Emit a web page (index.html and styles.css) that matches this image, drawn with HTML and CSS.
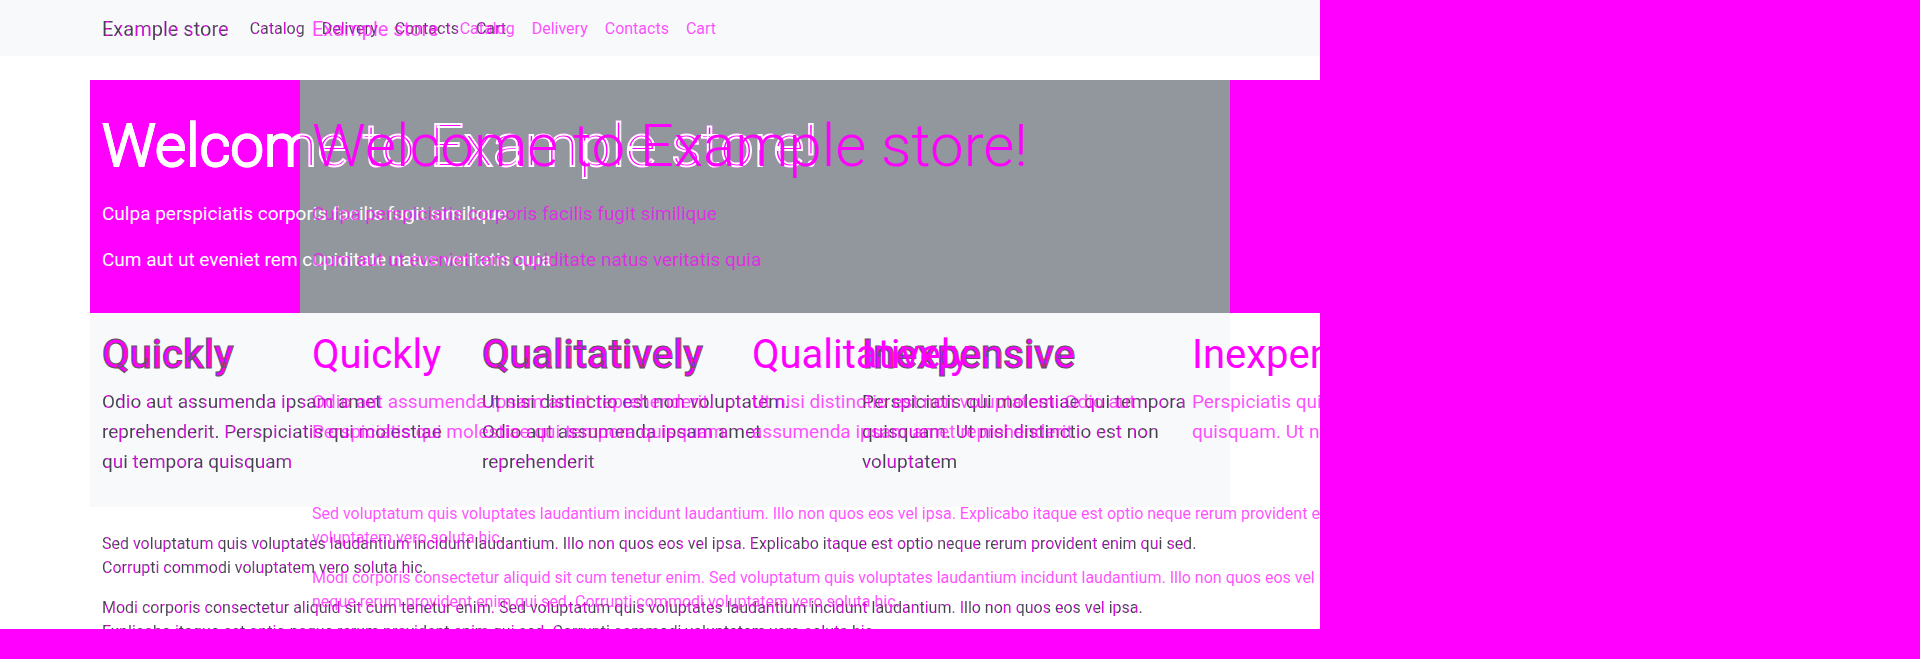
FILE: index.html
```html
<!DOCTYPE html>
<html lang="en">
<head>
<meta charset="utf-8">
<title>Example store</title>
<link rel="stylesheet" href="styles.css">
</head>
<body>
<div class="frame">
  <div class="layer base">
    <nav class="navbar">
      <div class="container nav-row">
        <a class="brand" href="#">Example store</a>
        <a class="nav-link" href="#">Catalog</a>
        <a class="nav-link" href="#">Delivery</a>
        <a class="nav-link" href="#">Contacts</a>
        <a class="nav-link" href="#">Cart</a>
      </div>
    </nav>
    <header class="hero">
      <h1 class="display">Welcome to Example store!</h1>
      <p class="lead">Culpa perspiciatis corporis facilis fugit similique</p>
      <p class="lead">Cum aut ut eveniet rem cupiditate natus veritatis quia</p>
    </header>
    <main class="container">
      <section class="features">
        <div><h2 class="title">Quickly</h2><p class="lead">Odio aut assumenda ipsam amet<br>reprehenderit. Perspiciatis qui molestiae<br>qui tempora quisquam</p></div>
        <div><h2 class="title">Qualitatively</h2><p class="lead">Ut nisi distinctio est non voluptatem.<br>Odio aut assumenda ipsam amet<br>reprehenderit</p></div>
        <div><h2 class="title">Inexpensive</h2><p class="lead">Perspiciatis qui molestiae qui tempora<br>quisquam. Ut nisi distinctio est non<br>voluptatem</p></div>
      </section>
      <section class="copy">
        <p class="text">Sed voluptatum quis voluptates laudantium incidunt laudantium. Illo non quos eos vel ipsa. Explicabo itaque est optio neque rerum provident enim qui sed.<br>Corrupti commodi voluptatem vero soluta hic.</p>
        <p class="text">Modi corporis consectetur aliquid sit cum tenetur enim. Sed voluptatum quis voluptates laudantium incidunt laudantium. Illo non quos eos vel ipsa.<br>Explicabo itaque est optio neque rerum provident enim qui sed. Corrupti commodi voluptatem vero soluta hic.</p>
      </section>
    </main>
  </div>
  <div class="layer ghost">
    <nav class="navbar">
      <div class="container nav-row">
        <a class="brand" href="#">Example store</a>
        <a class="nav-link" href="#">Catalog</a>
        <a class="nav-link" href="#">Delivery</a>
        <a class="nav-link" href="#">Contacts</a>
        <a class="nav-link" href="#">Cart</a>
      </div>
    </nav>
    <header class="hero">
      <h1 class="display">Welcome to Example store!</h1>
      <p class="lead">Culpa perspiciatis corporis facilis fugit similique</p>
      <p class="lead">Cum aut ut eveniet rem cupiditate natus veritatis quia</p>
    </header>
    <main class="container">
      <section class="features">
        <div><h2 class="title">Quickly</h2><p class="lead">Odio aut assumenda ipsam amet reprehenderit.<br>Perspiciatis qui molestiae qui tempora quisquam</p></div>
        <div><h2 class="title">Qualitatively</h2><p class="lead">Ut nisi distinctio est non voluptatem. Odio aut<br>assumenda ipsam amet reprehenderit</p></div>
        <div><h2 class="title">Inexpensive</h2><p class="lead">Perspiciatis qui molestiae qui tempora<br>quisquam. Ut nisi distinctio est non voluptatem</p></div>
      </section>
      <section class="copy">
        <p class="text">Sed voluptatum quis voluptates laudantium incidunt laudantium. Illo non quos eos vel ipsa. Explicabo itaque est optio neque rerum provident enim qui sed. Corrupti commodi<br>voluptatem vero soluta hic.</p>
        <p class="text">Modi corporis consectetur aliquid sit cum tenetur enim. Sed voluptatum quis voluptates laudantium incidunt laudantium. Illo non quos eos vel ipsa. Explicabo itaque est optio<br>neque rerum provident enim qui sed. Corrupti commodi voluptatem vero soluta hic.</p>
      </section>
    </main>
  </div>
</div>
</body>
</html>
```
FILE: styles.css
```css
:root {
  --mark: #ff00ff;
  --mark-soft: rgba(255, 0, 255, 0.7);
  --ink: #212529;
  --panel: #f7f9fb;
  --slate: #92969d;
}
* { box-sizing: border-box; }
body {
  margin: 0;
  background: var(--mark);
  color: var(--ink);
  font: 400 16px/24px Roboto, "Liberation Sans", sans-serif;
  overflow: hidden;
}
h1, h2, p { margin: 0; }
a { color: inherit; text-decoration: none; }

.frame {
  display: grid;
  max-width: 1320px;
  height: calc(100vh - 30px);
  overflow: hidden;
  background: #fff;
}
.layer { grid-area: 1 / 1; min-width: 0; }
.container { margin-left: 90px; max-width: 1140px; }

.navbar { height: 56px; padding-top: 2px; }
.base .navbar { background: var(--panel); }
.nav-row {
  display: flex;
  align-items: center;
  height: 100%;
  padding: 0 12px;
  gap: 17px;
}
.brand { font-size: 20px; line-height: 30px; margin-right: 4px; }

.hero {
  margin: 24px 0 0 90px;
  padding: 28px 12px 22px;
  display: flex;
  flex-direction: column;
  align-items: flex-start;
}
.display { font-size: 60px; line-height: 76px; font-weight: 300; margin-bottom: 15px; white-space: nowrap; }
.lead { font-size: 19px; line-height: 30px; margin-bottom: 16px; white-space: nowrap; }
.base .hero {
  color: #fff;
  background: linear-gradient(90deg, var(--mark) 210px, var(--slate) 210px 1140px, var(--mark) 1140px);
}
.base .display {
  background: linear-gradient(90deg, #fff 198px, var(--mark) 198px);
  background-clip: text;
  -webkit-background-clip: text;
  -webkit-text-fill-color: transparent;
  -webkit-text-stroke: 2px #fff;
}

.features {
  display: grid;
  grid-template-columns: repeat(3, minmax(0, 1fr));
  padding: 18px 0 14px;
}
.features > div { padding: 0 12px; }
.base .features { background: var(--panel); }
.title { font-size: 40px; line-height: 48px; font-weight: 500; margin-bottom: 8px; }
.base .title { color: var(--mark); -webkit-text-stroke: 1px #5c5660; }

.copy { padding: 25px 12px 0; }
.text { margin-bottom: 16px; white-space: nowrap; }
.base .text,
.base .features .lead,
.base .nav-link,
.base .brand {
  color: #5e2c63;
  background: repeating-linear-gradient(90deg, #44464d 0 4px, #d010d4 4px 7px);
  background-clip: text;
  -webkit-background-clip: text;
  -webkit-text-fill-color: transparent;
}

.ghost { color: var(--mark-soft); }
.ghost .container { margin-left: 300px; width: 1320px; max-width: none; }
.ghost .hero { margin-left: 300px; }
.ghost .display { color: var(--mark); }
.ghost .title { color: var(--mark); font-weight: 400; }
```
